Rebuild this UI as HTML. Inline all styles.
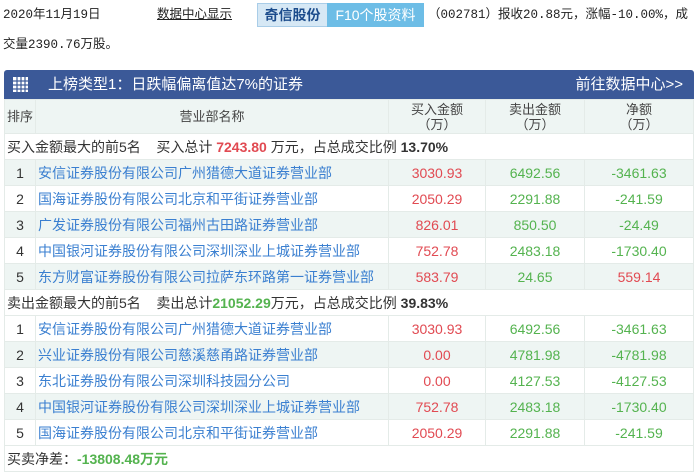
<!DOCTYPE html>
<html><head><meta charset="utf-8"><style>
body{margin:0;width:696px;height:471px;overflow:hidden;background:#fff;font-family:"Liberation Sans","Noto Sans CJK SC",sans-serif;font-size:14px;color:#333}
.t{position:absolute;font-family:"Liberation Mono","Noto Sans CJK SC",monospace;font-size:12.5px;color:#222;line-height:20px;white-space:nowrap}
.b1{position:absolute;left:257px;top:3px;width:69px;height:22px;background:#d6e8f5;border:1px solid #a9cde8;color:#1c4c8c;font-weight:bold;text-align:center;line-height:22px;font-size:14px;white-space:nowrap}
.b2{position:absolute;left:327px;top:3px;width:97px;height:24px;background:#6dbde6;color:#fff;text-align:center;line-height:24px;font-size:14px;white-space:nowrap}
.bar{position:absolute;left:4px;top:70px;width:690px;height:29px;background:#3b5998;color:#fff;font-size:15px;line-height:29px;border-radius:3px 3px 0 0}
table{position:absolute;left:4px;top:99px;width:690px;border-collapse:collapse}
td{border:1px solid #e4ebe8;height:25px;padding:0;white-space:nowrap}
tr.h td{background:#eef5f3;text-align:center;height:33px;line-height:15px;font-size:13px;color:#444}
.s td{background:#fff}
.g td{background:#eef5f3}
.n{text-align:center;font-size:14px;color:#333}
.nm{color:#3a7fd0;padding-left:2px}
.r{color:#e14a52;text-align:center;font-size:14px}
.gr{color:#54b34f;text-align:center;font-size:14px}
.sec td{padding-left:2px}
</style></head><body>
<div class="t" style="left:3px;top:5px">2020年11月19日</div>
<div class="t" style="left:157px;top:5px;text-decoration:underline">数据中心显示</div>
<div class="b1">奇信股份</div><div class="b2">F10个股资料</div>
<div class="t" style="left:428px;top:5px">（002781）报收20.88元，涨幅-10.00%，成</div>
<div class="t" style="left:3px;top:35px">交量2390.76万股。</div>
<div class="bar"><svg style="position:absolute;left:9px;top:7px" width="15" height="15"><rect x="0" y="0" width="15" height="15" fill="#fff"/><g stroke="#3b5998" stroke-width="1.2"><line x1="0" y1="4" x2="15" y2="4"/><line x1="0" y1="8" x2="15" y2="8"/><line x1="0" y1="12" x2="15" y2="12"/><line x1="4" y1="0" x2="4" y2="15"/><line x1="8" y1="0" x2="8" y2="15"/><line x1="12" y1="0" x2="12" y2="15"/></g></svg><span style="position:absolute;left:44px">上榜类型1：日跌幅偏离值达7%的证券</span><span style="position:absolute;right:11px">前往数据中心&gt;&gt;</span></div>
<table>
<tr class="h"><td style="width:30px">排序</td><td style="width:352px">营业部名称</td><td style="width:96px">买入金额<br>（万）</td><td style="width:98px">卖出金额<br>（万）</td><td>净额<br>（万）</td></tr>
<tr class="sec s"><td colspan="5">买入金额最大的前5名&nbsp;&nbsp;&nbsp; 买入总计 <b style="color:#e14a52">7243.80</b> 万元，占总成交比例 <b>13.70%</b></td></tr>
<tr class="g"><td class="n">1</td><td class="nm">安信证券股份有限公司广州猎德大道证券营业部</td><td class="r">3030.93</td><td class="gr">6492.56</td><td class="gr">-3461.63</td></tr>
<tr class="s"><td class="n">2</td><td class="nm">国海证券股份有限公司北京和平街证券营业部</td><td class="r">2050.29</td><td class="gr">2291.88</td><td class="gr">-241.59</td></tr>
<tr class="g"><td class="n">3</td><td class="nm">广发证券股份有限公司福州古田路证券营业部</td><td class="r">826.01</td><td class="gr">850.50</td><td class="gr">-24.49</td></tr>
<tr class="s"><td class="n">4</td><td class="nm">中国银河证券股份有限公司深圳深业上城证券营业部</td><td class="r">752.78</td><td class="gr">2483.18</td><td class="gr">-1730.40</td></tr>
<tr class="g"><td class="n">5</td><td class="nm">东方财富证券股份有限公司拉萨东环路第一证券营业部</td><td class="r">583.79</td><td class="gr">24.65</td><td class="r">559.14</td></tr>
<tr class="sec s"><td colspan="5">卖出金额最大的前5名&nbsp;&nbsp;&nbsp; 卖出总计<b style="color:#54b34f">21052.29</b>万元，占总成交比例 <b>39.83%</b></td></tr>
<tr class="s"><td class="n">1</td><td class="nm">安信证券股份有限公司广州猎德大道证券营业部</td><td class="r">3030.93</td><td class="gr">6492.56</td><td class="gr">-3461.63</td></tr>
<tr class="g"><td class="n">2</td><td class="nm">兴业证券股份有限公司慈溪慈甬路证券营业部</td><td class="r">0.00</td><td class="gr">4781.98</td><td class="gr">-4781.98</td></tr>
<tr class="s"><td class="n">3</td><td class="nm">东北证券股份有限公司深圳科技园分公司</td><td class="r">0.00</td><td class="gr">4127.53</td><td class="gr">-4127.53</td></tr>
<tr class="g"><td class="n">4</td><td class="nm">中国银河证券股份有限公司深圳深业上城证券营业部</td><td class="r">752.78</td><td class="gr">2483.18</td><td class="gr">-1730.40</td></tr>
<tr class="s"><td class="n">5</td><td class="nm">国海证券股份有限公司北京和平街证券营业部</td><td class="r">2050.29</td><td class="gr">2291.88</td><td class="gr">-241.59</td></tr>
<tr class="sec s"><td colspan="5">买卖净差：<b style="color:#54b34f">-13808.48万元</b></td></tr>
</table>
</body></html>
